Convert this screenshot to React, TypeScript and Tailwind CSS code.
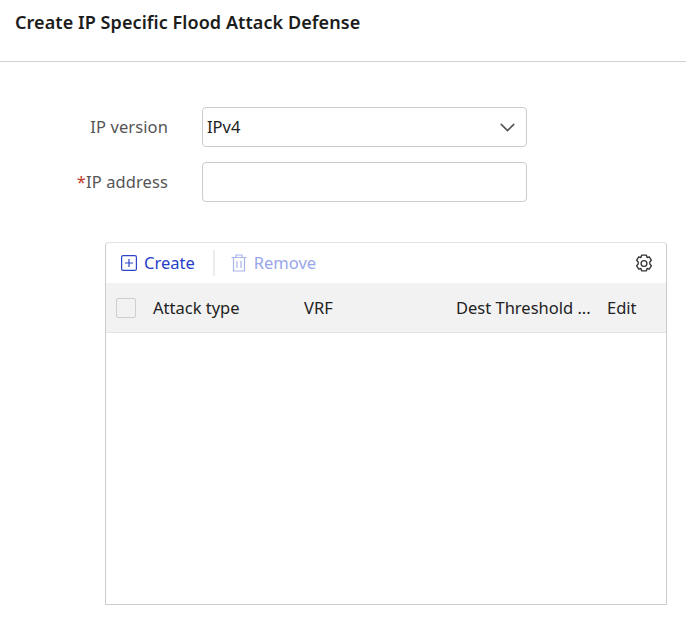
import { ChevronDown } from "lucide-react";

function Gear() {
  return (
    <svg width="18" height="19" viewBox="0 0 18 19" fill="none" stroke="#333" strokeWidth="1.3" strokeLinejoin="round">
      <path d="M6.6 1.2h4.8l.7 2.3 2.2-.6 2.1 3.4-1.6 1.7v2l1.6 1.7-2.1 3.4-2.2-.6-.7 2.3H6.6l-.7-2.3-2.2.6-2.1-3.4L3.2 10V8L1.600 6.300l2.100-3.400 2.200.6z" />
      <circle cx="9" cy="9.500" r="2.900" />
    </svg>
  );
}

export default function App() {
  return (
    <div className="w-[686px] h-[617px] overflow-hidden bg-white font-['Noto_Sans','Open_Sans',sans-serif] text-[16.5px]">
      <div className="h-[62px] border-b border-[#cfcfcf] pl-[15px] pt-[9px]">
        <h1 className="text-[18px] leading-[26px] font-semibold tracking-[0.07px] text-[#1c1c1c]">Create IP Specific Flood Attack Defense</h1>
      </div>

      <div className="pt-[45px] flex flex-col gap-[15px]">
        <div className="flex items-center h-[40px]">
          <label className="w-[168px] text-right text-[#555] leading-[24px] tracking-[0.1px]">IP version</label>
          <div className="ml-[34px] w-[325px] h-[40px] border border-[#cccccc] rounded-[4px] flex items-center justify-between pl-[4px] pr-[6px]">
            <span className="text-[#222]">IPv4</span>
            <ChevronDown size={25} strokeWidth={1.5} color="#555" />
          </div>
        </div>
        <div className="flex items-center h-[40px]">
          <label className="w-[168px] text-right text-[#555] leading-[24px] tracking-[0.1px]"><span className="text-[#c0392b]">*</span>IP address</label>
          <div className="ml-[34px] w-[325px] h-[40px] border border-[#cccccc] rounded-[4px]" />
        </div>
      </div>

      <div className="ml-[105px] mt-[40px] w-[562px] h-[363px] border border-[#e4e4e4] border-b-[#cccccc] border-l-[#cccccc] border-r-[#cccccc] rounded-t-[4px] flex flex-col">
        <div className="h-[40px] flex items-center pl-[15px] pr-[13px]">
          <svg width="16" height="16" viewBox="0 0 16 16" fill="none" stroke="#2f45c8" strokeWidth="1.2">
            <rect x="0.6" y="0.6" width="14.8" height="14.8" rx="1.5" />
            <path d="M8 4v8M4 8h8" />
          </svg>
          <span className="ml-[7px] text-[#2440c8]">Create</span>
          <div className="ml-[18px] w-[2px] h-[26px] bg-[#ececec]" />
          <svg className="ml-[16px]" width="16" height="18" viewBox="0 0 16 18" fill="none" stroke="#a9b4ec" strokeWidth="1.2">
            <path d="M0.5 3.5h15M5 3.5V1h6v2.5M2.5 3.5v13.5h11V3.5M6 7v7M10 7v7" />
          </svg>
          <span className="ml-[7px] text-[#98a6ea]">Remove</span>
          <div className="ml-auto"><Gear /></div>
        </div>
        <div className="h-[50px] bg-[#f2f2f2] border-b border-[#e4e4e4] flex items-center text-[#222]">
          <div className="w-[47px] pl-[10px]">
            <div className="w-[20px] h-[20px] border border-[#cfcfcf] rounded-[2px] bg-[#f2f2f2]" />
          </div>
          <div className="w-[151px] pt-[1px]">Attack type</div>
          <div className="w-[152px] pt-[1px]">VRF</div>
          <div className="w-[151px] pt-[1px] whitespace-nowrap">Dest Threshold ...</div>
          <div className="pt-[1px]">Edit</div>
        </div>
      </div>
    </div>
  );
}
